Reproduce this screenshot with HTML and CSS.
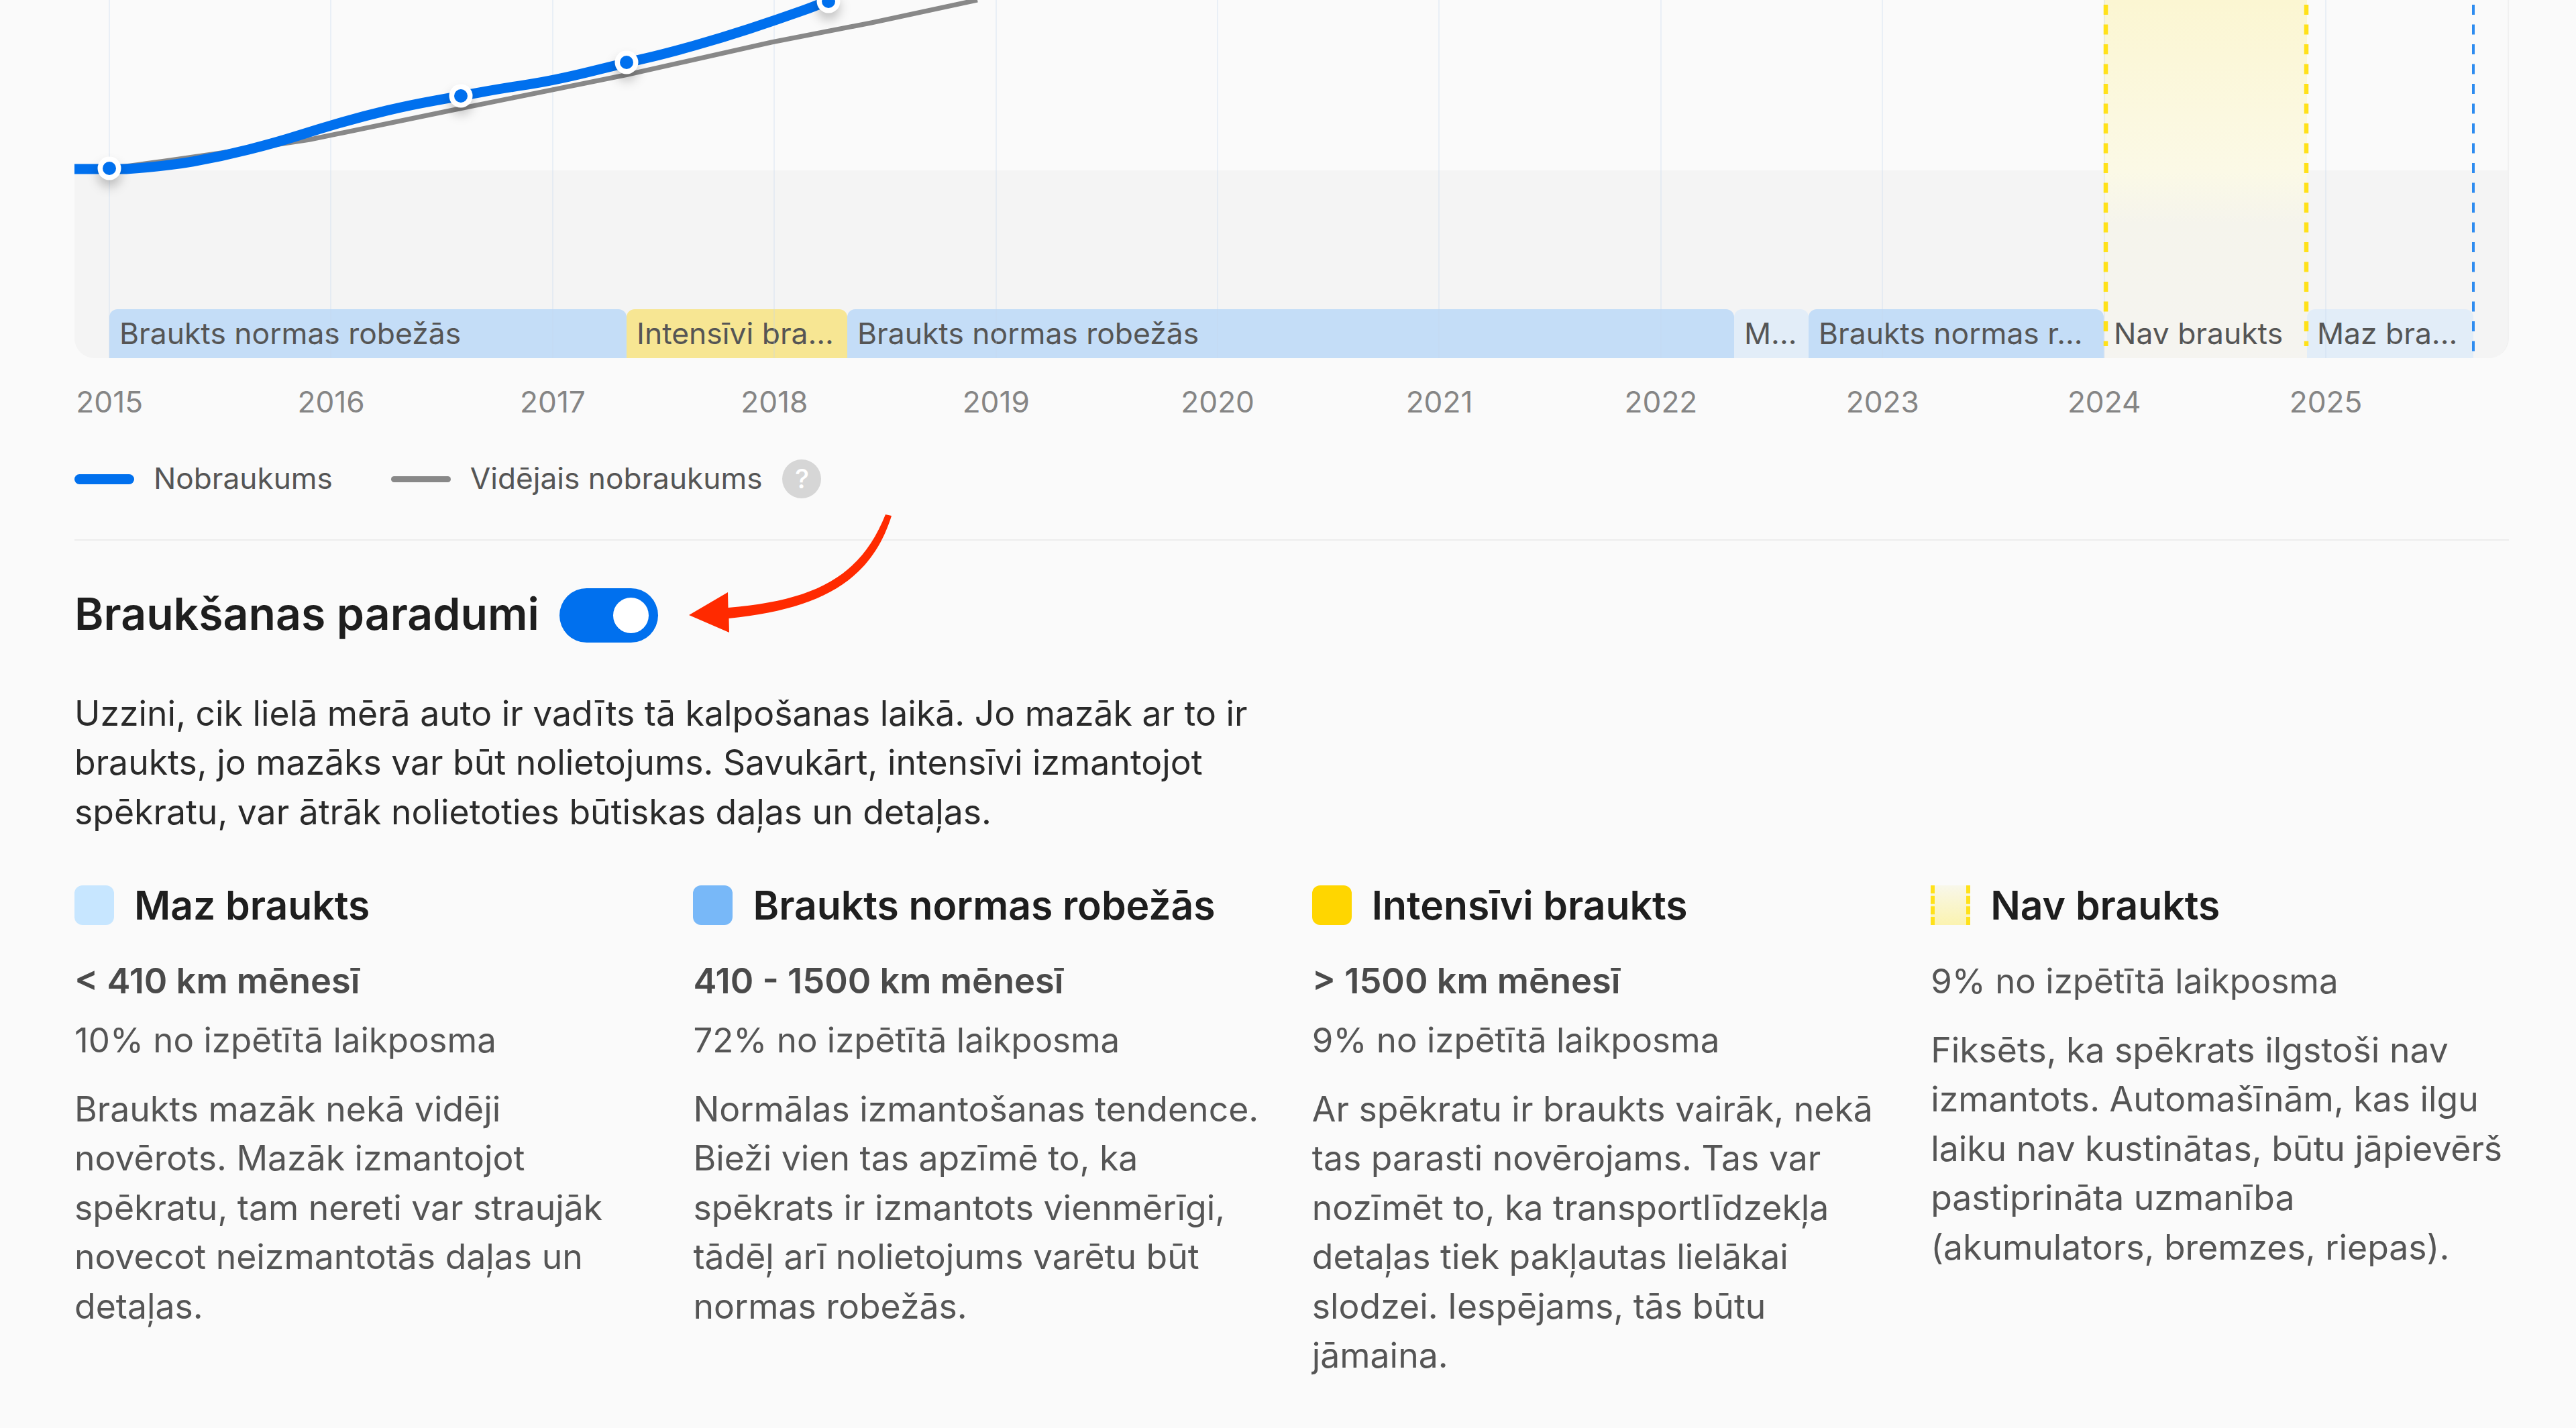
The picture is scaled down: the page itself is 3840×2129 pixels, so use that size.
FILE: index.html
```html
<!DOCTYPE html>
<html lang="lv">
<head>
<meta charset="utf-8">
<title>Braukšanas paradumi</title>
<link rel="stylesheet" href="styles.css">
</head>
<body>
<main class="page">
  <section class="chart">
    <div class="band"></div>
    <div class="gridlines">
      <i></i><i></i><i></i><i></i><i></i><i></i><i></i><i></i><i></i><i></i><i></i>
    </div>
    <div class="gap-fill"></div>
    <svg class="plot" width="3628" height="534" viewBox="0 0 3628 534">
      <path class="dash-y" d="M3028 7V516M3327 7V516"/>
      <path class="dash-b" d="M3576 7V524"/>
      <path class="avg" d="M52 251Q135 241 350 208.300L574 162L823 111.500L1039 63L1189 33.700L1346 0"/>
      <path class="run" d="M0 252L77 252Q135 248 176.500 240.800Q218 233.600 259.500 223Q301 212.500 334 202Q367 191.500 400 182Q433 172.600 466.500 164.600Q500 156.600 538 149.800Q576 143 604 137.800Q632 132.600 673.500 126.300Q715 120 769 106.700Q823 93.400 852 86.700Q881 80 922.500 68.400Q964 56.800 1005.500 43.200Q1047 29.500 1085.500 15.800Q1124 2 1140 -8"/>
      <g class="marker"><circle cx="52" cy="251" r="17.500"/><circle class="dot" cx="52" cy="251" r="10"/></g>
      <g class="marker"><circle cx="576" cy="143" r="17.500"/><circle class="dot" cx="576" cy="143" r="10"/></g>
      <g class="marker"><circle cx="823" cy="93" r="17.500"/><circle class="dot" cx="823" cy="93" r="10"/></g>
      <g class="marker"><circle cx="1124" cy="2" r="17.500"/><circle class="dot" cx="1124" cy="2" r="10"/></g>
    </svg>
    <div class="segments">
      <div class="seg seg-norm" style="width:771px">Braukts normas robežās</div>
      <div class="seg seg-high" style="width:329px">Intensīvi bra...</div>
      <div class="seg seg-norm" style="width:1322px">Braukts normas robežās</div>
      <div class="seg seg-low" style="width:111px">M...</div>
      <div class="seg seg-norm" style="width:440px">Braukts normas r...</div>
      <div class="seg seg-none" style="width:303px">Nav braukts</div>
      <div class="seg seg-low" style="width:248px">Maz bra...</div>
    </div>
  </section>

  <div class="axis">
    <span>2015</span><span>2016</span><span>2017</span><span>2018</span><span>2019</span><span>2020</span><span>2021</span><span>2022</span><span>2023</span><span>2024</span><span>2025</span>
  </div>

  <div class="legend">
    <div class="legend-item"><span class="key key-run"></span>Nobraukums</div>
    <div class="legend-item"><span class="key key-avg"></span>Vidējais nobraukums<span class="help">?</span></div>
  </div>

  <hr class="rule">

  <div class="heading">
    <h2>Braukšanas paradumi</h2>
    <span class="toggle"><span class="knob"></span></span>
  </div>

  <p class="intro">Uzzini, cik lielā mērā auto ir vadīts tā kalpošanas laikā. Jo mazāk ar to ir braukts, jo mazāks var būt nolietojums. Savukārt, intensīvi izmantojot spēkratu, var ātrāk nolietoties būtiskas daļas un detaļas.</p>

  <div class="cols">
    <article class="col">
      <h3><span class="swatch sw-low"></span>Maz braukts</h3>
      <p class="range">&lt; 410 km mēnesī</p>
      <p class="share">10% no izpētītā laikposma</p>
      <p class="desc">Braukts mazāk nekā vidēji novērots. Mazāk izmantojot spēkratu, tam nereti var straujāk novecot neizmantotās daļas un detaļas.</p>
    </article>
    <article class="col">
      <h3><span class="swatch sw-norm"></span>Braukts normas robežās</h3>
      <p class="range">410 - 1500 km mēnesī</p>
      <p class="share">72% no izpētītā laikposma</p>
      <p class="desc">Normālas izmantošanas tendence. Bieži vien tas apzīmē to, ka spēkrats ir izmantots vienmērīgi, tādēļ arī nolietojums varētu būt normas robežās.</p>
    </article>
    <article class="col">
      <h3><span class="swatch sw-high"></span>Intensīvi braukts</h3>
      <p class="range">&gt; 1500 km mēnesī</p>
      <p class="share">9% no izpētītā laikposma</p>
      <p class="desc">Ar spēkratu ir braukts vairāk, nekā tas parasti novērojams. Tas var nozīmēt to, ka transportlīdzekļa detaļas tiek pakļautas lielākai slodzei. Iespējams, tās būtu jāmaina.</p>
    </article>
    <article class="col">
      <h3><span class="swatch sw-none"></span>Nav braukts</h3>
      <p class="share">9% no izpētītā laikposma</p>
      <p class="desc">Fiksēts, ka spēkrats ilgstoši nav izmantots. Automašīnām, kas ilgu laiku nav kustinātas, būtu jāpievērš pastiprināta uzmanība (akumulators, bremzes, riepas).</p>
    </article>
  </div>

  <svg class="arrow" width="340" height="200" viewBox="1010 760 340 200">
    <path d="M1027 917L1085 883L1085.500 906C1215 895 1283 860 1320 767L1329 769C1299 865 1225 908 1086.500 922L1087 943Z"/>
  </svg>
</main>
</body>
</html>
```
FILE: styles.css
```css
* { box-sizing: border-box; }
html, body { margin: 0; padding: 0; background: #fafafa; }
body { font-family: Inter, "Liberation Sans", sans-serif; color: #222; overflow: hidden; }
.page { position: relative; height: 2129px; padding: 0 100px 0 111px; font-size: 51.7px; line-height: 73.5px; }

.chart { position: relative; height: 534px; font-size: 44.4px; background: #fafafa; border-right: 2px solid #f1f1f1; border-radius: 0 0 30px 30px; overflow: hidden; display: flex; flex-direction: column; justify-content: flex-end; }
.band { position: absolute; left: 0; right: 0; top: 254px; bottom: 0; background: #f4f4f4; }
.gridlines { position: absolute; inset: 0 0 0 51px; display: flex; z-index: 2; pointer-events: none; }
.gridlines i { flex: 0 0 330.4px; border-left: 2px solid rgba(195, 215, 240, .3); }
.gap-fill { position: absolute; left: 3025px; width: 303px; top: 0; bottom: 0; background: linear-gradient(#fbf6d2, #fbf9e6 48%, #f5f4ec 62%, #f5f4f0); z-index: 0; }
.plot { position: absolute; left: 0; top: 0; z-index: 3; }
.dash-y { fill: none; stroke: #ffe119; stroke-width: 6.5; stroke-dasharray: 15 14.500; }
.dash-b { fill: none; stroke: #2e8cf0; stroke-width: 4; stroke-dasharray: 15 14.500; }
.avg { fill: none; stroke: #888; stroke-width: 7; }
.run { fill: none; stroke: #0070ee; stroke-width: 15; stroke-linecap: round; }
.marker { fill: #fff; filter: drop-shadow(0 10px 8px rgba(0, 0, 0, .22)); }
.marker .dot { fill: #0070ee; }

.segments { position: relative; z-index: 1; display: flex; margin-left: 52px; height: 73px; }
.seg { padding-left: 15px; line-height: 73px; border-radius: 12px 12px 0 0; color: #555; white-space: nowrap; overflow: hidden; }
.seg-norm { background: #c4ddf7; }
.seg-high { background: #f7e693; }
.seg-low { background: #e2edf8; }
.seg-none { background: transparent; }

.axis { display: flex; margin-left: -113px; height: 132px; align-items: center; font-size: 44.2px; color: #858585; }
.axis span { flex: 0 0 330.4px; text-align: center; }

.legend { display: flex; gap: 87px; height: 96px; align-items: center; font-size: 44.2px; color: #555; }
.legend-item { display: flex; align-items: center; }
.key { width: 89px; height: 15px; border-radius: 7.500px; margin-right: 29px; }
.key-run { background: #0070ee; }
.key-avg { background: #888; height: 9px; border-radius: 4.500px; margin-right: 29px; }
.help { width: 58px; height: 58px; border-radius: 50%; margin-left: 30px; background: #d6d6d6; color: #fff; font-size: 40px; font-weight: 500; line-height: 58px; text-align: center; }

.rule { margin: 42px 0 0; border: 0; border-top: 2px solid #ededed; }

.heading { display: flex; align-items: flex-start; gap: 30px; margin-top: 68px; height: 82px; }
.heading h2 { margin: 0; font-size: 66.1px; line-height: 82px; font-weight: 600; color: #1e1e1e; }
.toggle { position: relative; width: 147px; height: 81px; margin-top: 3px; border-radius: 41px; background: #0070ee; }
.knob { position: absolute; right: 14px; top: 14px; width: 53px; height: 53px; border-radius: 50%; background: #fff; }

.intro { margin: 70.500px 0 0; width: 1880px; color: #2a2a2a; }

.cols { display: grid; grid-template-columns: repeat(4, 922.4px); margin-top: 73px; }
.col { padding-right: 65px; }
.col h3 { margin: 0; display: flex; align-items: center; gap: 30px; font-size: 58.8px; line-height: 59px; font-weight: 600; color: #1e1e1e; }
.swatch { flex: none; width: 59px; height: 59px; border-radius: 12px; }
.sw-low { background: #c7e6ff; }
.sw-norm { background: #78b8f8; }
.sw-high { background: #ffd600; }
.sw-none { border-radius: 0; background: linear-gradient(#f8f7ea, #fbf3b0); border-left: 6px dashed #ffe119; border-right: 6px dashed #ffe119; }
.range { margin: 46.500px 0 0; font-size: 52.4px; font-weight: 600; color: #4a4a4a; }
.share { margin: 46.500px 0 0; font-size: 51px; color: #555; }
.range + .share { margin-top: 14.500px; }
.desc { margin: 29.500px 0 0; color: #555; }

.arrow { position: absolute; left: 1010px; top: 760px; }
.arrow path { fill: #ff2a00; }
```
